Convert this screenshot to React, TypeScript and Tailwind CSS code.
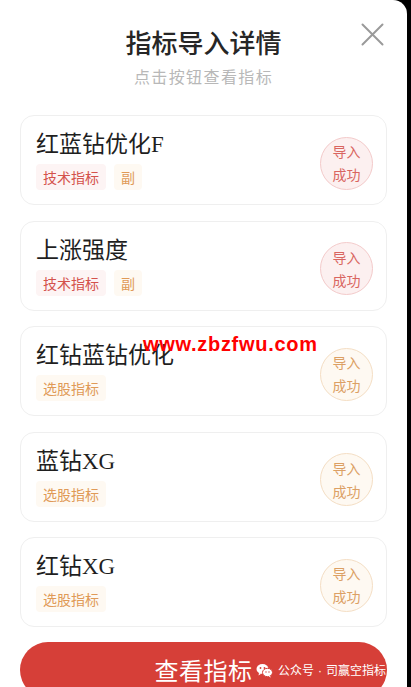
import React from 'react';

type Tone = 'red' | 'orange';

interface Item {
    title: string;
    tags: { label: string; tone: Tone }[];
    badge: Tone;
}

const items: Item[] = [
    { title: '红蓝钻优化F', tags: [{ label: '技术指标', tone: 'red' }, { label: '副', tone: 'orange' }], badge: 'red' },
    { title: '上涨强度', tags: [{ label: '技术指标', tone: 'red' }, { label: '副', tone: 'orange' }], badge: 'red' },
    { title: '红钻蓝钻优化', tags: [{ label: '选股指标', tone: 'orange' }], badge: 'orange' },
    { title: '蓝钻XG', tags: [{ label: '选股指标', tone: 'orange' }], badge: 'orange' },
    { title: '红钻XG', tags: [{ label: '选股指标', tone: 'orange' }], badge: 'orange' },
];

const sans = { fontFamily: '"Noto Sans CJK SC", "Noto Sans", sans-serif' };

function Tag({ label, tone }: { label: string; tone: Tone }) {
    return (
        <span className={`h-[26px] flex items-center px-[7px] rounded-[4px] text-[14px] leading-none
            ${tone === 'red' ? 'bg-[#fdf4f4] text-[#d4524c]' : 'bg-[#fef9f2] text-[#e09a57]'}`}>
            {label}
        </span>
    );
}

function Badge({ tone }: { tone: Tone }) {
    return (
        <div className={`mt-[6px] w-[53px] h-[53px] rounded-full border flex flex-col items-center justify-center
            text-[14px] leading-[23px]
            ${tone === 'red'
                ? 'border-[#f3caca] bg-[#fcf0f0] text-[#d96560]'
                : 'border-[#f4dec4] bg-[#fef9f2] text-[#dca064]'}`}>
            <span>导入</span>
            <span>成功</span>
        </div>
    );
}

export default function App() {
    return (
        <div className="relative w-[411px] h-[687px] bg-black overflow-hidden" style={sans}>
            <div className="w-[407px] h-full bg-white rounded-tr-[14px] overflow-hidden flex flex-col">
                {/* header */}
                <div className="relative flex flex-col items-center pt-[25px]">
                    <h1 className="text-[26px] leading-[34px] font-medium text-[#262626]">指标导入详情</h1>
                    <p className="mt-[5px] text-[16px] leading-[24px] tracking-[1.4px] text-[#b8b8b8]">点击按钮查看指标</p>
                    <svg className="absolute left-[361px] top-[23px]" width="23" height="23" viewBox="0 0 23 23">
                        <path d="M1.5 1.5 L21.5 21.5 M21.5 1.5 L1.5 21.5" stroke="#9a9a9a" strokeWidth="2" strokeLinecap="round" />
                    </svg>
                </div>

                <div className="mt-[27px] mx-[20px] flex flex-col gap-[15.5px]">
                    {items.map((item, index) => (
                        <div key={index} className="h-[90px] rounded-[14px] border border-[#efefef] flex items-center justify-between pl-[15px] pr-[13px]">
                            <div className="flex flex-col">
                                <div className="text-[23px] leading-[30px] text-[#1f1f1f]"
                                    style={{ fontFamily: '"Liberation Serif", "Noto Sans CJK SC", serif' }}>
                                    {item.title}
                                </div>
                                <div className="mt-[4px] flex gap-[8px]">
                                    {item.tags.map((t, i) => <Tag key={i} label={t.label} tone={t.tone} />)}
                                </div>
                            </div>
                            <Badge tone={item.badge} />
                        </div>
                    ))}
                </div>

                <div className="mt-[15px] mx-[20px] shrink-0 h-[56px] rounded-full bg-[#d63f38] flex items-center justify-center text-white text-[24px] tracking-[0.5px]">
                    查看指标
                </div>
            </div>

            {/* watermarks */}
            <div className="absolute left-[143px] top-[332px] text-[20px] leading-[24px] font-black text-[#ff0000] tracking-[0.7px]"
                style={{ fontFamily: '"Liberation Sans", Arial, sans-serif' }}>
                www.zbzfwu.com
            </div>
            <div className="absolute left-[256px] top-[661px] flex items-center gap-[5px] text-white text-[12px] leading-[18px]">
                <svg width="17" height="15" viewBox="0 0 17 15">
                    <ellipse cx="6.5" cy="6" rx="6" ry="5" fill="white" />
                    <path d="M3 10 L2.5 12.5 L5.5 10.5 Z" fill="white" />
                    <ellipse cx="11.5" cy="9.5" rx="5" ry="4.2" fill="white" stroke="#d63f38" strokeWidth="1" />
                    <path d="M14 13 L15 14.5 L12.5 13.4 Z" fill="white" />
                    <circle cx="4.5" cy="5" r="0.9" fill="#d63f38" />
                    <circle cx="8.5" cy="5" r="0.9" fill="#d63f38" />
                    <circle cx="10" cy="9" r="0.7" fill="#d63f38" />
                    <circle cx="13" cy="9" r="0.7" fill="#d63f38" />
                </svg>
                <span>
                    公众号
                    <span className="mx-[4px]" style={{ fontFamily: '"Liberation Sans", sans-serif' }}>·</span>
                    司赢空指标
                </span>
            </div>
        </div>
    );
}
